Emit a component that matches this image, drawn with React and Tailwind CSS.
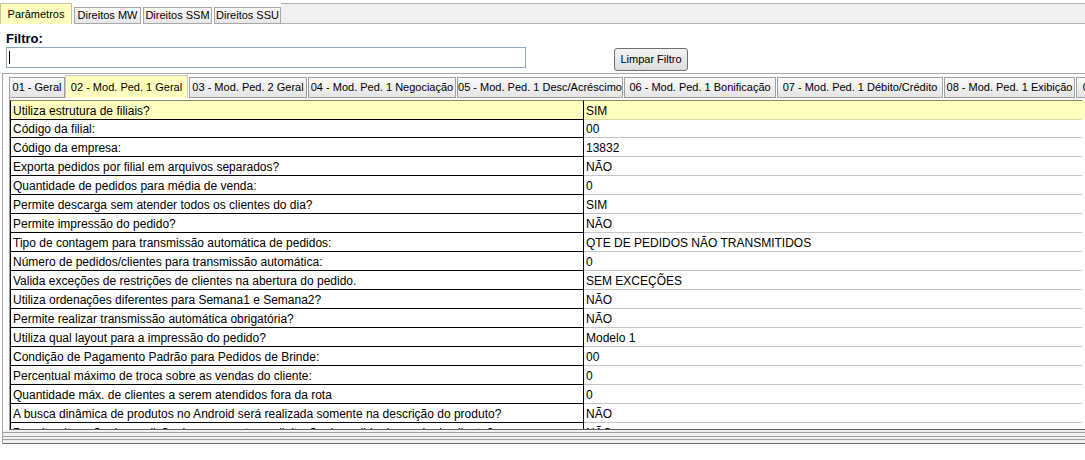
import React from "react";

const topTabs = [
  { label: "Parâmetros", w: "w-[72px]", active: true },
  { label: "Direitos MW", w: "w-[67px]" },
  { label: "Direitos SSM", w: "w-[69px]" },
  { label: "Direitos SSU", w: "w-[67px]" },
];

const subTabs = [
  { label: "01 - Geral", w: "w-[56px]" },
  { label: "02 - Mod. Ped. 1 Geral", w: "w-[123px]", active: true },
  { label: "03 - Mod. Ped. 2 Geral", w: "w-[118px]" },
  { label: "04 - Mod. Ped. 1 Negociação", w: "w-[148px]" },
  { label: "05 - Mod. Ped. 1 Desc/Acréscimo", w: "w-[166px]" },
  { label: "06 - Mod. Ped. 1 Bonificação", w: "w-[152px]" },
  { label: "07 - Mod. Ped. 1 Débito/Crédito", w: "w-[166px]" },
  { label: "08 - Mod. Ped. 1 Exibição", w: "w-[131px]" },
  { label: "09 - Mod. Ped. 1 Outros", w: "w-[131px]" },
];

const rows = [
  ["Utiliza estrutura de filiais?", "SIM"],
  ["Código da filial:", "00"],
  ["Código da empresa:", "13832"],
  ["Exporta pedidos por filial em arquivos separados?", "NÃO"],
  ["Quantidade de pedidos para média de venda:", "0"],
  ["Permite descarga sem atender todos os clientes do dia?", "SIM"],
  ["Permite impressão do pedido?", "NÃO"],
  ["Tipo de contagem para transmissão automática de pedidos:", "QTE DE PEDIDOS NÃO TRANSMITIDOS"],
  ["Número de pedidos/clientes para transmissão automática:", "0"],
  ["Valida exceções de restrições de clientes na abertura do pedido.", "SEM EXCEÇÕES"],
  ["Utiliza ordenações diferentes para Semana1 e Semana2?", "NÃO"],
  ["Permite realizar transmissão automática obrigatória?", "NÃO"],
  ["Utiliza qual layout para a impressão do pedido?", "Modelo 1"],
  ["Condição de Pagamento Padrão para Pedidos de Brinde:", "00"],
  ["Percentual máximo de troca sobre as vendas do cliente:", "0"],
  ["Quantidade máx. de clientes a serem atendidos fora da rota", "0"],
  ["A busca dinâmica de produtos no Android será realizada somente na descrição do produto?", "NÃO"],
  ["Permite alteração da condição de pagamento na digitação do pedido de venda do cliente?", "NÃO"],
];

export default function App() {
  return (
    <div className="w-[1085px] h-[460px] bg-white overflow-hidden text-black font-['Liberation_Sans',Arial,sans-serif]">
      {/* top tabs */}
      <div className="flex items-end h-[24px]">
        {topTabs.map((t, i) =>
          t.active ? (
            <div
              key={i}
              className={`${t.w} h-[21px] shrink-0 bg-[#ffffbf] border border-b-0 border-[#c4c4a0] flex items-center justify-center text-[11px] leading-none`}
            >
              {t.label}
            </div>
          ) : (
            <div
              key={i}
              className={`${t.w} h-[17px] shrink-0 ml-[2px] bg-gradient-to-b from-[#fbfbfb] to-[#e6e6e6] border border-[#a8a8a8] flex items-center justify-center text-[11px] leading-none`}
            >
              {t.label}
            </div>
          )
        )}
        <div className="flex-1 h-[21px] bg-[#f0f0f0] border-t border-b border-[#b4b4b4]" />
      </div>

      {/* filter */}
      <div className="h-[49px] flex items-start pl-[6px] pt-[7px]">
        <div className="flex flex-col">
          <div className="text-[13px] font-bold leading-[15px]">Filtro:</div>
          <div className="mt-[1px] w-[520px] h-[21px] border border-[#8fa6bd] bg-white flex items-center pl-[2px]">
            <div className="w-[1px] h-[13px] bg-black" />
          </div>
        </div>
        <div className="ml-[88px] mt-[17px] w-[74px] h-[23px] rounded-[3px] border border-[#707070] bg-gradient-to-b from-[#f4f4f4] to-[#dcdcdc] flex items-center justify-center text-[11px] leading-none">
          Limpar Filtro
        </div>
      </div>

      {/* inner panel */}
      <div className="ml-[2px] border-l border-t border-[#a8a8a8]">
        <div className="flex items-end h-[24px] pl-[5px]">
          {subTabs.map((t, i) =>
            t.active ? (
              <div
                key={i}
                className={`${t.w} h-[23px] shrink-0 bg-[#ffffbf] border border-b-0 border-[#c8c8c8] flex items-center justify-center text-[11px] leading-none whitespace-nowrap`}
              >
                {t.label}
              </div>
            ) : (
              <div
                key={i}
                className={`${t.w} h-[21px] shrink-0 bg-gradient-to-b from-[#fbfbfb] to-[#e4e4e4] border border-[#a0a0a0] ml-[1px] flex items-center justify-center text-[11px] leading-none whitespace-nowrap overflow-hidden`}
              >
                {t.label}
              </div>
            )
          )}
        </div>

        <div className="ml-[6px] h-[332px] border-l border-b border-l-[#a0a0a0] border-b-[#606060] pt-[2px] overflow-hidden">
          {rows.map(([k, v], i) => {
            const first = i === 0;
            return (
              <div key={i} className={`flex h-[19px] ${first ? "bg-[#ffffbf]" : ""}`}>
                <div
                  className={`w-[574px] shrink-0 border-l border-r border-b border-black pl-[2px] text-[12px] leading-[20px] whitespace-nowrap overflow-hidden ${
                    first ? "border-t border-t-[#8c8c64] h-[20px] -mb-[1px]" : ""
                  }`}
                >
                  {k}
                </div>
                <div
                  className={`w-[498px] shrink-0 border-b pl-[2px] text-[12px] leading-[20px] whitespace-nowrap overflow-hidden ${
                    first ? "border-t border-t-[#8c8c64] border-b-[#d8d8a8] h-[20px] -mb-[1px]" : "border-b-[#c4c4c4]"
                  }`}
                >
                  {v}
                </div>
              </div>
            );
          })}
        </div>

        <div className="flex flex-col">
          <div className="h-[2px] bg-[#f0f0f0]" />
          <div className="h-[1px] bg-[#a0a0a0]" />
          <div className="h-[3px] bg-[#f0f0f0]" />
          <div className="h-[1px] bg-[#a0a0a0]" />
          <div className="h-[2px] bg-[#f0f0f0]" />
          <div className="h-[1px] bg-[#a0a0a0]" />
          <div className="h-[3px] bg-[#f0f0f0]" />
          <div className="h-[1px] bg-[#707070]" />
        </div>
      </div>
    </div>
  );
}
